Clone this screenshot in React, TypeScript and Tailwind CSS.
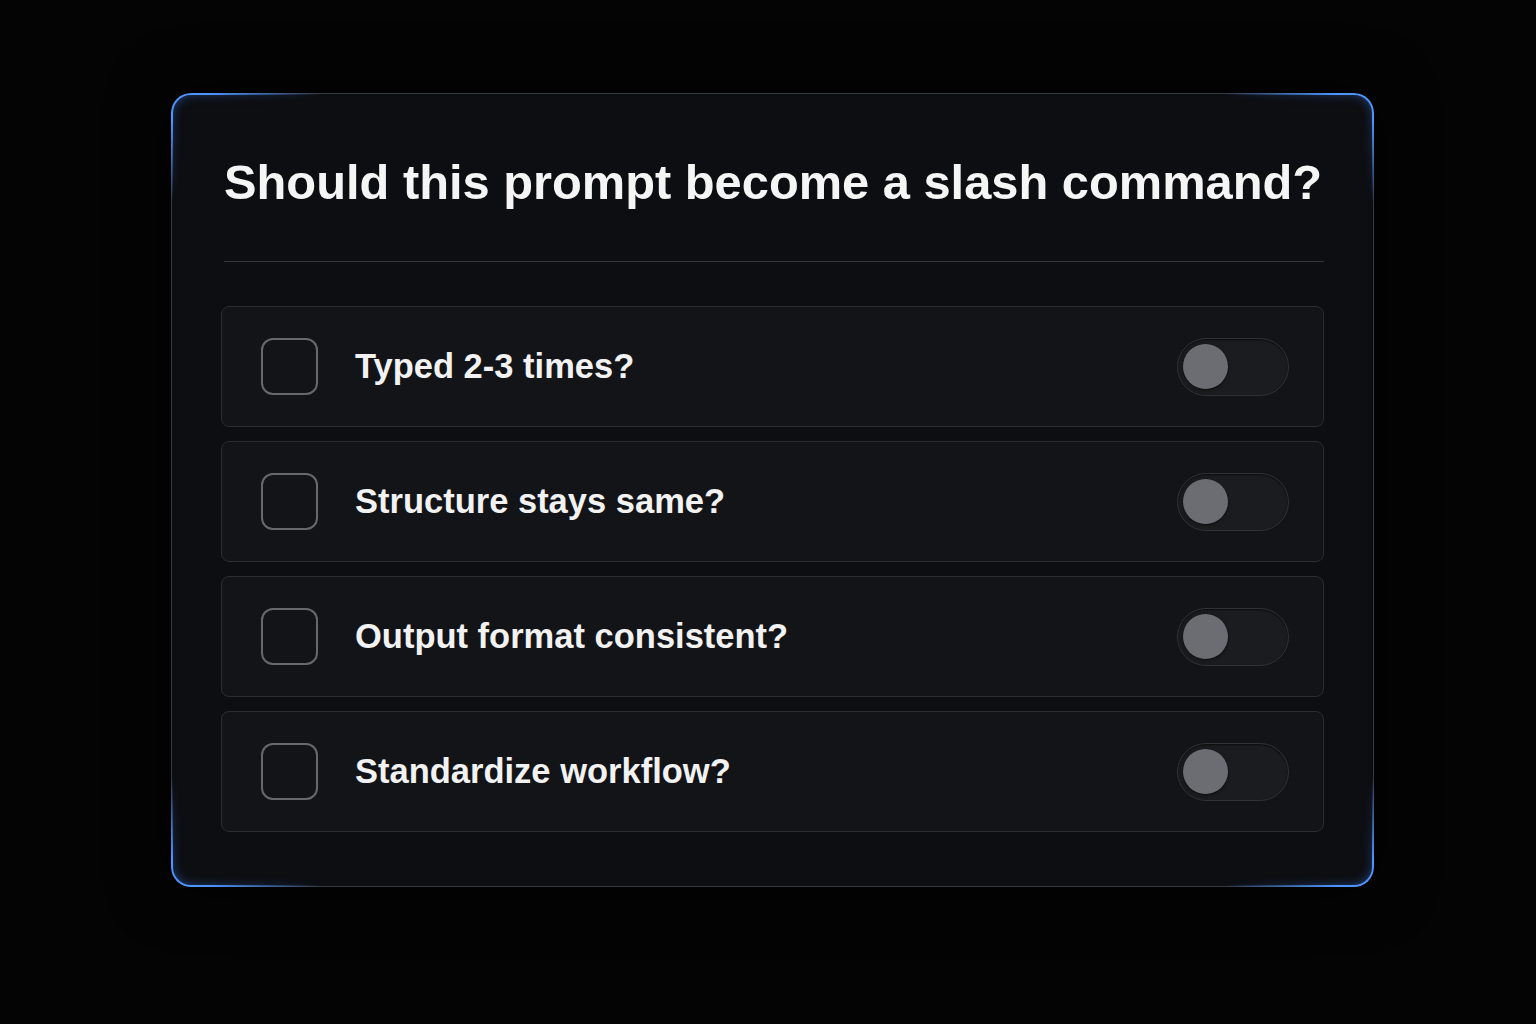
import React from "react";

const items = [
  "Typed 2-3 times?",
  "Structure stays same?",
  "Output format consistent?",
  "Standardize workflow?",
];

const Toggle = () => (
  <div className="flex h-[58px] w-[112px] items-center rounded-full border border-[#2f3136] bg-[#1b1c20] pl-[5px] shadow-[inset_0_1px_2px_rgba(0,0,0,0.6)]">
    <div className="h-[45px] w-[45px] rounded-full bg-[#6c6d72] shadow-[0_1px_3px_rgba(0,0,0,0.6)]" />
  </div>
);

const Row = ({ label }: { label: string }) => (
  <div className="flex h-[121px] items-center rounded-[8px] border border-[#2a2c31] bg-[#131418] pl-[39px] pr-[34px]">
    <div className="h-[57px] w-[57px] shrink-0 rounded-[12px] border-2 border-[#66686d]" />
    <span className="ml-[37px] flex-1 text-[34.5px] font-bold text-[#f2f2f2]">
      {label}
    </span>
    <Toggle />
  </div>
);

export default function App() {
  return (
    <div
      className="flex min-h-screen items-start bg-[#040404] pl-[171px] pt-[93px]"
      style={{ fontFamily: "'Liberation Sans', Arial, sans-serif" }}
    >
      <div className="relative w-[1203px] rounded-[20px] border border-[#363940] bg-[#0d0e12] px-[49px] pb-[54px] pt-[57px] shadow-[0_0_60px_rgba(0,0,0,0.8)]">
        {/* blue corner glows */}
        <div className="pointer-events-none absolute -left-px -top-px h-[110px] w-[150px] rounded-tl-[20px] border-l-2 border-t-2 border-[#4d95ff] shadow-[-2px_-2px_14px_-3px_rgba(60,130,255,0.9),inset_3px_3px_12px_-6px_rgba(60,130,255,0.6)] [mask-image:radial-gradient(ellipse_farthest-side_at_top_left,black_25%,transparent_100%)]" />
        <div className="pointer-events-none absolute -right-px -top-px h-[110px] w-[150px] rounded-tr-[20px] border-r-2 border-t-2 border-[#4d95ff] shadow-[2px_-2px_14px_-3px_rgba(60,130,255,0.9),inset_-3px_3px_12px_-6px_rgba(60,130,255,0.6)] [mask-image:radial-gradient(ellipse_farthest-side_at_top_right,black_25%,transparent_100%)]" />
        <div className="pointer-events-none absolute -bottom-px -left-px h-[110px] w-[150px] rounded-bl-[20px] border-b-2 border-l-2 border-[#4d95ff] shadow-[-2px_2px_14px_-3px_rgba(60,130,255,0.9),inset_3px_-3px_12px_-6px_rgba(60,130,255,0.6)] [mask-image:radial-gradient(ellipse_farthest-side_at_bottom_left,black_25%,transparent_100%)]" />
        <div className="pointer-events-none absolute -bottom-px -right-px h-[110px] w-[150px] rounded-br-[20px] border-b-2 border-r-2 border-[#4d95ff] shadow-[2px_2px_14px_-3px_rgba(60,130,255,0.9),inset_-3px_-3px_12px_-6px_rgba(60,130,255,0.6)] [mask-image:radial-gradient(ellipse_farthest-side_at_bottom_right,black_25%,transparent_100%)]" />

        <h1 className="whitespace-nowrap pl-[3px] text-[48.8px] font-bold leading-[62px] text-[#f5f5f5]">
          Should this prompt become a slash command?
        </h1>
        <div className="mt-[48px] ml-[3px] h-px bg-[#34363b]" />
        <div className="mt-[44px] flex flex-col gap-[14px]">
          {items.map((t) => (
            <Row key={t} label={t} />
          ))}
        </div>
      </div>
    </div>
  );
}
